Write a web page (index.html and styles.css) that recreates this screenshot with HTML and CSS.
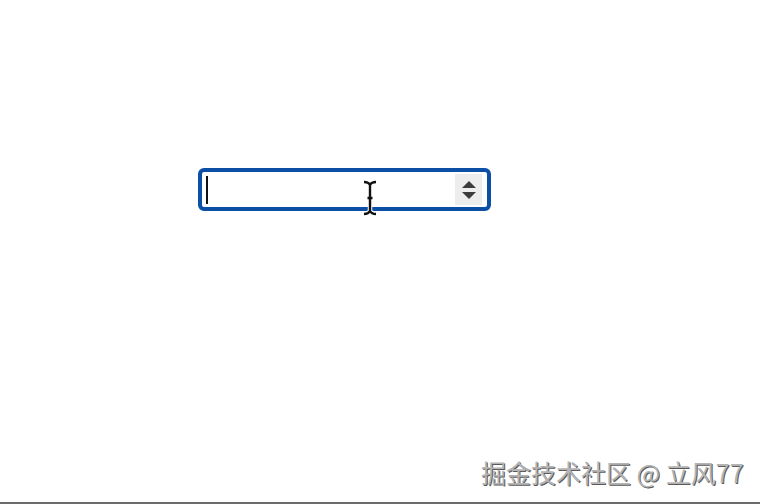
FILE: index.html
```html
<!DOCTYPE html>
<html lang="zh">
<head>
    <meta charset="UTF-8">
    <meta name="viewport" content="width=device-width, initial-scale=1.0">
    <title>Number Input</title>
    <link rel="stylesheet" href="styles.css">
</head>
<body>
    <div class="page">
        <!-- Ô nhập số đang focus -->
        <div class="number-field">
            <span class="caret"></span>
            <span class="spinner">
                <span class="arrow arrow-up"></span>
                <span class="arrow arrow-down"></span>
            </span>
        </div>

        <!-- Con trỏ chuột dạng I-beam -->
        <svg class="ibeam" width="18" height="36" viewBox="0 0 18 36">
            <path d="M3 2 C6 2 8 3 9 5 C10 3 12 2 15 2 M9 5 V31 M6.5 18 H11.5 M3 34 C6 34 8 33 9 31 C10 33 12 34 15 34"
                  fill="none" stroke="#fff" stroke-width="4.5" stroke-linecap="round"/>
            <path d="M3 2 C6 2 8 3 9 5 C10 3 12 2 15 2 M9 5 V31 M6.5 18 H11.5 M3 34 C6 34 8 33 9 31 C10 33 12 34 15 34"
                  fill="none" stroke="#111" stroke-width="2.4"/>
        </svg>

        <div class="watermark">掘金技术社区 @ 立风77</div>
    </div>
</body>
</html>
```

FILE: styles.css
```css
* {
    margin: 0;
    padding: 0;
    box-sizing: border-box;
}

body {
    font-family: "Noto Sans", "Noto Sans CJK SC", sans-serif;
    background-color: #fff;
}

.page {
    position: relative;
    width: 760px;
    height: 504px;
    padding: 168px 0 0 198px;
    border-bottom: 2px solid #6b6b6b;
}

.number-field {
    width: 293px;
    height: 43px;
    border: 4px solid #0b4fa6;
    border-radius: 6px;
    background: #fff;
    display: flex;
    align-items: center;
    padding: 2px 5px 2px 4px;
}

.caret {
    width: 2px;
    height: 28px;
    background: #111;
}

.spinner {
    margin-left: auto;
    width: 27px;
    height: 31px;
    background: #ededed;
    display: flex;
    flex-direction: column;
    align-items: center;
    justify-content: center;
    gap: 4px;
}

.arrow {
    width: 0;
    height: 0;
    border-left: 7px solid transparent;
    border-right: 7px solid transparent;
}

.arrow-up {
    border-bottom: 7px solid #3c3c3c;
}

.arrow-down {
    border-top: 7px solid #3c3c3c;
}

.ibeam {
    position: absolute;
    left: 361px;
    top: 180px;
}

/* Chữ watermark nổi nhẹ */
.watermark {
    position: absolute;
    left: 481px;
    top: 454px;
    font-family: "Noto Sans CJK SC", sans-serif;
    font-size: 25px;
    color: #b4b4b4;
    text-shadow: 1px 1px 0 #5a5a5a, -1px -1px 0 #fff;
    white-space: nowrap;
}
```
